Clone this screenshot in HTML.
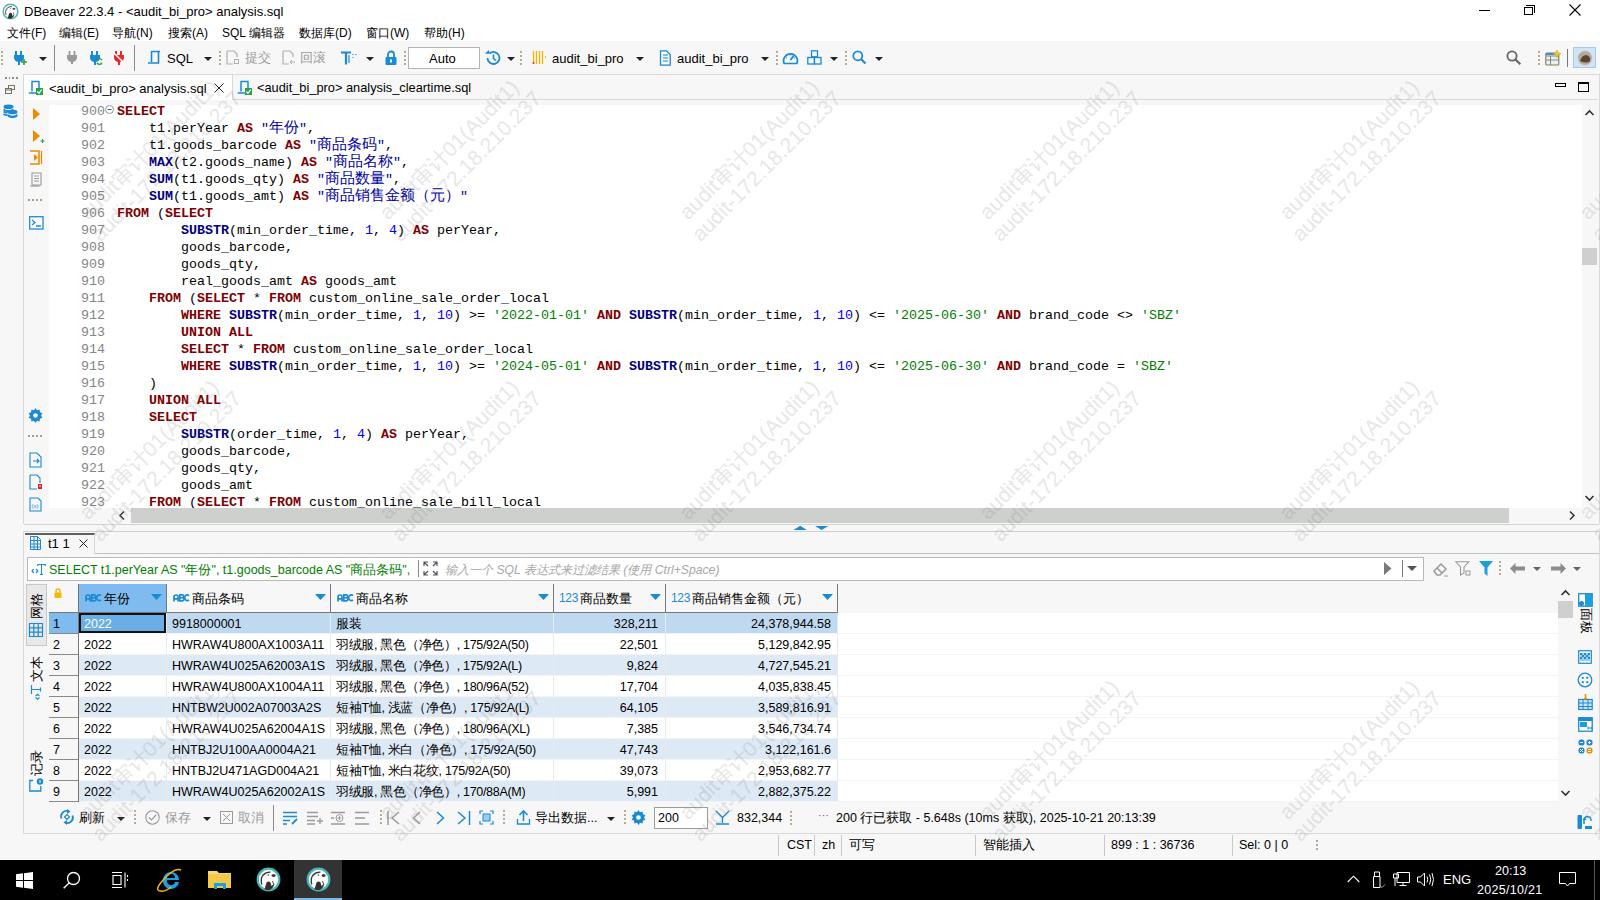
<!DOCTYPE html>
<html><head><meta charset="utf-8">
<style>
*{margin:0;padding:0;box-sizing:border-box}
html,body{width:1600px;height:900px;overflow:hidden;background:#f7f7f7;font-family:"Liberation Sans",sans-serif;font-size:13px;color:#000}
body{position:relative}
.a{position:absolute}
.t{position:absolute;white-space:pre;line-height:1}
svg{position:absolute;overflow:visible}
.code{position:absolute;left:117px;top:103px;font-family:"Liberation Mono",monospace;font-size:13.33px;line-height:17px;white-space:pre;color:#000}
.lns{position:absolute;left:60px;top:103px;width:45px;text-align:right;font-family:"Liberation Mono",monospace;font-size:13.33px;line-height:17px;white-space:pre;color:#858585}
.k{color:#7f0000;font-weight:bold}
.f{color:#00007f;font-weight:bold}
.s{color:#008000}
.n{color:#0000ff}
.q{color:#0000a0}
.dd{position:absolute;width:0;height:0;border-left:4px solid transparent;border-right:4px solid transparent;border-top:4px solid #222}
.grip{position:absolute;width:2px;height:16px;background:repeating-linear-gradient(#b8ab8f 0 2px,transparent 2px 4px)}
.sep{position:absolute;width:1px;height:26px;background:#8c8c8c}
.ui{font-size:12.5px}
.grey{color:#9a9a9a}
/* grid */
.row{position:absolute;left:49px;width:789px;height:21px}
.cell{position:absolute;top:0;height:21px;line-height:21px;font-size:12.5px;white-space:pre;overflow:hidden}
.wm{position:absolute;color:rgba(120,120,120,0.17);-webkit-text-stroke:0.3px rgba(120,120,120,0.17);letter-spacing:0.15px;font-size:21px;line-height:24px;white-space:pre;transform:rotate(-45deg);transform-origin:0 0;pointer-events:none}
.cj{font-size:15px;line-height:0}
.mn{font-size:12px}
</style></head><body>
<!-- TITLE BAR -->
<div class="a" style="left:0;top:0;width:1600px;height:41px;background:#fff"></div>
<svg style="left:1.5px;top:2.5px" width="17" height="17" viewBox="0 0 25 25"><circle cx="12.5" cy="12.5" r="10.8" fill="#fff" stroke="#45b8b8" stroke-width="2.2"/><path d="M8.5 22.5L10.5 15.5Q12.5 13.5 14.5 15.5L15.5 19L18.5 16.5Q17.5 21.5 13 23.2Z" fill="#3a2e28"/><path d="M5.8 17.5Q4.2 11.5 7 8.2Q10 5 14.5 5.2" stroke="#3a2e28" stroke-width="1.3" fill="none"/><ellipse cx="17.6" cy="8.6" rx="2.1" ry="1.4" fill="#3a2e28"/><circle cx="12.3" cy="8" r="0.7" fill="#3a2e28"/><path d="M16.5 14l1.2 3.5" stroke="#3a2e28" stroke-width="0.9"/></svg>
<div class="t" style="left:24px;top:5px;font-size:13px;color:#000">DBeaver 22.3.4 - &lt;audit_bi_pro&gt; analysis.sql</div>
<div class="a" style="left:1479px;top:10px;width:11px;height:1px;background:#000"></div>
<div class="a" style="left:1524px;top:7px;width:9px;height:8px;border:1px solid #000"></div>
<div class="a" style="left:1526px;top:5px;width:9px;height:8px;border-top:1px solid #000;border-right:1px solid #000"></div>
<svg style="left:1569px;top:4px" width="12" height="12"><path d="M0.5 0.5L11.5 11.5M11.5 0.5L0.5 11.5" stroke="#000" stroke-width="1.1"/></svg>
<!-- MENU -->
<div class="t mn" style="left:7px;top:27px">文件(F)</div>
<div class="t mn" style="left:59px;top:27px">编辑(E)</div>
<div class="t mn" style="left:112px;top:27px">导航(N)</div>
<div class="t mn" style="left:168px;top:27px">搜索(A)</div>
<div class="t mn" style="left:222px;top:27px">SQL 编辑器</div>
<div class="t mn" style="left:299px;top:27px">数据库(D)</div>
<div class="t mn" style="left:366px;top:27px">窗口(W)</div>
<div class="t mn" style="left:424px;top:27px">帮助(H)</div>
<!-- TOOLBAR -->
<div class="a" style="left:0;top:41px;width:1600px;height:33px;background:#f7f7f7"></div>
<div class="a" style="left:23px;top:74px;width:1577px;height:1px;background:#dadada"></div>
<div class="grip" style="left:1px;top:51px"></div>
<svg style="left:13px;top:50px" width="14" height="16" viewBox="0 0 14 16"><path d="M3 1v4M8 1v4" stroke="#1a8ad4" stroke-width="2"/><path d="M1 5h10v3a5 5 0 0 1-4 4v3h-2v-3a5 5 0 0 1-4-4z" fill="#1a8ad4"/><path d="M8 12h6M11 9v6" stroke="#2aa33a" stroke-width="1.6"/></svg>
<div class="dd" style="left:39px;top:57px"></div>
<div class="sep" style="left:54px;top:45px"></div>
<svg style="left:67px;top:51px" width="10" height="13" viewBox="0 0 10 13"><path d="M2.5 0v4M7.5 0v4" stroke="#9a9a9a" stroke-width="1.8"/><path d="M0 4h10v3a5 5 0 0 1-4 4v2h-2v-2a5 5 0 0 1-4-4z" fill="#9a9a9a"/></svg>
<svg style="left:89px;top:50px" width="14" height="16" viewBox="0 0 14 16"><path d="M3 1v4M8 1v4" stroke="#1a8ad4" stroke-width="2"/><path d="M1 5h10v3a5 5 0 0 1-4 4v3h-2v-3a5 5 0 0 1-4-4z" fill="#1a8ad4"/><path d="M8 10a3 3 0 0 1 5 0M13 13a3 3 0 0 1-5 0" stroke="#2aa33a" stroke-width="1.4" fill="none"/></svg>
<svg style="left:113px;top:50px" width="13" height="16" viewBox="0 0 13 16"><path d="M3 1v4M8 1v4" stroke="#e8262b" stroke-width="2"/><path d="M1 5h10v3a5 5 0 0 1-4 4v3h-2v-3a5 5 0 0 1-4-4z" fill="#e8262b"/><path d="M0 2L12 14" stroke="#fff" stroke-width="1.5"/></svg>
<div class="sep" style="left:134px;top:45px"></div>
<svg style="left:147px;top:50px" width="15" height="15" viewBox="0 0 15 15"><path d="M4 1.5h9M4.5 1.5v10.5M11.5 1.5v11.5H1" stroke="#1a8ad4" stroke-width="1.6" fill="none"/></svg>
<div class="t" style="left:167px;top:52px;font-size:13px">SQL</div>
<div class="dd" style="left:204px;top:57px"></div>
<div class="grip" style="left:219px;top:51px"></div>
<svg style="left:226px;top:50px" width="14" height="15" viewBox="0 0 14 15"><path d="M1 1h7l3 3v3M1 1v13h6" stroke="#b0b0b0" stroke-width="1.2" fill="none"/><rect x="8.5" y="9.5" width="4" height="4" stroke="#b0b0b0" fill="none"/></svg>
<div class="t ui grey" style="left:245px;top:52px">提交</div>
<svg style="left:282px;top:50px" width="14" height="15" viewBox="0 0 14 15"><path d="M1 1h7l3 3v3M1 1v13h6" stroke="#b0b0b0" stroke-width="1.2" fill="none"/><path d="M8 12h5M10 10l-2 2 2 2" stroke="#b0b0b0" fill="none"/></svg>
<div class="t ui grey" style="left:300px;top:52px">回滚</div>
<svg style="left:340px;top:51px" width="17" height="14" viewBox="0 0 17 14"><path d="M1 1.5h10M6 1.5v12" stroke="#1a8ad4" stroke-width="2.2"/><path d="M9 4v8M13 3v1M13 6v1M16 3v1" stroke="#1a8ad4" stroke-width="1.2"/></svg>
<div class="dd" style="left:366px;top:57px"></div>
<svg style="left:385px;top:50px" width="12" height="15" viewBox="0 0 12 15"><path d="M3 7V4.5a3 3 0 0 1 6 0V7" stroke="#1a8ad4" stroke-width="1.8" fill="none"/><rect x="0.5" y="7" width="11" height="8" rx="1" fill="#1a8ad4"/><rect x="5" y="9.5" width="2" height="3" fill="#fff"/></svg>
<div class="grip" style="left:404px;top:51px"></div>
<div class="a" style="left:408px;top:47px;width:72px;height:22px;background:#fff;border:1px solid #b4b4b4"></div>
<div class="t" style="left:429px;top:52px;font-size:13px">Auto</div>
<svg style="left:484px;top:50px" width="17" height="16" viewBox="0 0 17 16"><path d="M3.5 8a6 6 0 1 0 2-4.5" stroke="#1a8ad4" stroke-width="1.8" fill="none"/><path d="M1 3.5l4.5 0.5-0.5-4z" fill="#1a8ad4"/><path d="M9.5 4.5v4l2.5 2" stroke="#1a8ad4" stroke-width="1.6" fill="none"/></svg>
<div class="dd" style="left:507px;top:57px"></div>
<div class="grip" style="left:520px;top:51px"></div>
<svg style="left:532px;top:50px" width="15" height="15" viewBox="0 0 15 15"><path d="M1.5 1v13M4.5 1v13M7.5 1v13M10.5 1v13" stroke="#f0b400" stroke-width="1.3"/><path d="M13.5 6v2" stroke="#f0b400" stroke-width="1"/><rect x="0.8" y="12" width="1.5" height="2" fill="#e03030"/></svg>
<div class="t" style="left:552px;top:52px;font-size:13px">audit_bi_pro</div>
<div class="dd" style="left:636px;top:57px"></div>
<svg style="left:658px;top:50px" width="13" height="16" viewBox="0 0 13 16"><path d="M2.5 0.8h6l3.7 3.7v10.7h-9.7z" stroke="#1a8ad4" stroke-width="1.3" fill="none"/><path d="M5 5h5M5 8h5M5 11h5" stroke="#1a8ad4" stroke-width="1.2"/></svg>
<div class="t" style="left:677px;top:52px;font-size:13px">audit_bi_pro</div>
<div class="dd" style="left:761px;top:57px"></div>
<div class="grip" style="left:776px;top:51px"></div>
<svg style="left:782px;top:51px" width="17" height="14" viewBox="0 0 17 14"><path d="M2 12.5a7 7 0 1 1 13 0z" stroke="#1a8ad4" stroke-width="1.6" fill="none"/><path d="M8.5 9l3-4" stroke="#1a8ad4" stroke-width="1.8"/><path d="M4 7h1M8.5 3.5v1M12 7h1" stroke="#1a8ad4"/></svg>
<svg style="left:807px;top:50px" width="15" height="15" viewBox="0 0 15 15"><rect x="4.5" y="0.8" width="6" height="6" stroke="#1a8ad4" stroke-width="1.3" fill="none"/><rect x="0.8" y="7.5" width="6.5" height="6.5" stroke="#1a8ad4" stroke-width="1.3" fill="none"/><rect x="7.5" y="7.5" width="6.5" height="6.5" stroke="#1a8ad4" stroke-width="1.3" fill="none"/></svg>
<div class="dd" style="left:830px;top:57px"></div>
<div class="grip" style="left:845px;top:51px"></div>
<svg style="left:852px;top:50px" width="15" height="15" viewBox="0 0 15 15"><circle cx="5.8" cy="5.8" r="4.5" stroke="#1a8ad4" stroke-width="1.8" fill="none"/><path d="M9 9l4.5 4.5" stroke="#1a8ad4" stroke-width="2.2"/></svg>
<div class="dd" style="left:875px;top:57px"></div>
<!-- right toolbar -->
<svg style="left:1506px;top:50px" width="16" height="16" viewBox="0 0 16 16"><circle cx="6" cy="6" r="4.6" stroke="#666" stroke-width="1.8" fill="none"/><path d="M9.3 9.3l5 5" stroke="#666" stroke-width="2.2"/></svg>
<div class="grip" style="left:1538px;top:51px"></div>
<svg style="left:1545px;top:50px" width="16" height="16" viewBox="0 0 16 16"><rect x="0.8" y="3" width="13" height="12" rx="1" stroke="#8b7a50" stroke-width="1.1" fill="#e6f2fb"/><path d="M1 6h13M5.5 6v9M1 10h13" stroke="#8b7a50" stroke-width="0.9"/><rect x="1" y="3" width="13" height="2" fill="#3a8fd6"/><path d="M12 0l1.2 2.6 2.6 1.2-2.6 1.2L12 7.6l-1.2-2.6-2.6-1.2 2.6-1.2z" fill="#f5c542" stroke="#d49a00" stroke-width="0.5"/></svg>
<div class="a" style="left:1567px;top:49px;width:1px;height:18px;background:#777"></div>
<div class="a" style="left:1573px;top:47px;width:23px;height:21px;background:#cde5f7;border:1px solid #9fcbf0"></div>
<svg style="left:1577px;top:50px" width="16" height="16" viewBox="0 0 16 16"><circle cx="8" cy="8" r="7.4" fill="#b8a89a" stroke="#ddd" stroke-width="0.8"/><path d="M3 11q2-6 6-6q5 1 4 6q-3 3-10 0z" fill="#5a4536"/></svg>
<!-- LEFT TRIM -->
<div class="a" style="left:5px;top:77px;width:13px;height:2px;background:repeating-linear-gradient(90deg,#8c8c8c 0 2px,transparent 2px 3.5px)"></div>
<svg style="left:5px;top:85px" width="10" height="9" viewBox="0 0 10 9"><rect x="3.5" y="0.5" width="6" height="4" stroke="#7a7060" fill="none"/><rect x="0.5" y="3.5" width="6" height="5" stroke="#7a7060" fill="#f7f7f7"/><path d="M1 5h5" stroke="#7a7060"/></svg>
<svg style="left:3px;top:104px" width="15" height="15" viewBox="0 0 15 15"><ellipse cx="5.5" cy="2.8" rx="5" ry="2.3" fill="#1a8ad4"/><path d="M0.5 4.5q5 3.5 10 0v2q-5 3.5-10 0z" fill="#1a8ad4"/><ellipse cx="9.5" cy="8" rx="5" ry="2.3" fill="#1a8ad4"/><path d="M4.5 10q5 3.5 10 0v2.5q-5 3.5-10 0z" fill="#1a8ad4"/><path d="M0.5 7.5q2 1.5 4 1.3M0.5 10q2 1.5 4 1.3" stroke="#1a8ad4" stroke-width="1.6" fill="none"/></svg>
<!-- EDITOR PANE -->
<div class="a" style="left:23px;top:74px;width:1px;height:450px;background:#d9d9d9"></div>
<div class="a" style="left:1599px;top:74px;width:1px;height:450px;background:#d9d9d9"></div>
<div class="a" style="left:24px;top:75px;width:1574px;height:25px;background:#f7f7f7"></div>
<div class="a" style="left:24px;top:99px;width:1574px;height:1px;background:#d9d9d9"></div>
<div class="a" style="left:24px;top:75px;width:209px;height:25px;background:#fff;border-right:1px solid #d9d9d9"></div>
<svg style="left:28px;top:80px" width="16" height="16" viewBox="0 0 16 16"><path d="M3.5 1.5h8M4 1.5v10M11 1.5v11.5H0.8" stroke="#1a8ad4" stroke-width="1.5" fill="none"/><rect x="8" y="8" width="7" height="7" fill="#27a245"/><path d="M9.3 11.5l1.7 1.7 2.7-3.5" stroke="#fff" stroke-width="1.3" fill="none"/></svg>
<div class="t" style="left:49px;top:82px;font-size:13px">&lt;audit_bi_pro&gt; analysis.sql</div>
<svg style="left:214px;top:83px" width="10" height="10"><path d="M0.5 0.5L9.5 9.5M9.5 0.5L0.5 9.5" stroke="#222" stroke-width="1"/></svg>
<div class="a" style="left:232px;top:75px;width:1px;height:24px;background:#d9d9d9"></div>
<svg style="left:237px;top:80px" width="16" height="16" viewBox="0 0 16 16"><path d="M3.5 1.5h8M4 1.5v10M11 1.5v11.5H0.8" stroke="#1a8ad4" stroke-width="1.5" fill="none"/><rect x="8" y="8" width="7" height="7" fill="#27a245"/><path d="M9.3 11.5l1.7 1.7 2.7-3.5" stroke="#fff" stroke-width="1.3" fill="none"/></svg>
<div class="t" style="left:257px;top:82px;font-size:12.8px">&lt;audit_bi_pro&gt; analysis_cleartime.sql</div>
<div class="a" style="left:1555px;top:83px;width:11px;height:4px;border:1.5px solid #000"></div>
<div class="a" style="left:1578px;top:82px;width:11px;height:10px;border:1.5px solid #000;border-top-width:2.5px"></div>
<!-- editor body -->
<div class="a" style="left:49px;top:105px;width:1533px;height:403px;background:#fff"></div>
<!-- ruler icons -->
<svg style="left:33px;top:108px" width="8" height="12"><path d="M0 0L7 6L0 12z" fill="#f08a00"/></svg>
<svg style="left:33px;top:130px" width="12" height="14"><path d="M0 0L7 6L0 12z" fill="#f08a00"/><path d="M7.5 11h4M9.5 9v4" stroke="#2aa33a" stroke-width="1.2"/></svg>
<svg style="left:29px;top:150px" width="14" height="15" viewBox="0 0 14 15"><path d="M1 1h9v13H1" stroke="#f08a00" stroke-width="1.6" fill="none"/><path d="M5 4l4 3.5-4 3.5z" fill="#f08a00"/><path d="M12.5 1v13" stroke="#f08a00" stroke-width="1.3"/></svg>
<svg style="left:30px;top:172px" width="13" height="15" viewBox="0 0 13 15"><path d="M2 1h9v12H2z" stroke="#9a9a9a" stroke-width="1.1" fill="none"/><path d="M4 4h5M4 6.5h5M4 9h5" stroke="#9a9a9a"/><path d="M0.5 14h9" stroke="#9a9a9a" stroke-width="1.3"/></svg>
<div class="a" style="left:28px;top:199px;width:14px;height:2px;background:repeating-linear-gradient(90deg,#a89f8a 0 2px,transparent 2px 4px)"></div>
<svg style="left:29px;top:216px" width="15" height="14" viewBox="0 0 15 14"><rect x="0.7" y="0.7" width="13.3" height="12.3" stroke="#1a8ad4" stroke-width="1.3" fill="#fff"/><path d="M3 4l3 2.5-3 2.5M7 10h5" stroke="#1a8ad4" stroke-width="1.3" fill="none"/></svg>
<svg style="left:28px;top:408px" width="15" height="15" viewBox="0 0 15 15"><path d="M7.5 0l1.5 2.2 2.6-.7.3 2.7 2.5 1-1.3 2.3 1.3 2.3-2.5 1-.3 2.7-2.6-.7L7.5 15 6 12.8l-2.6.7-.3-2.7-2.5-1L2 7.5.6 5.2l2.5-1 .3-2.7L6 2.2z" fill="#1a8ad4"/><circle cx="7.5" cy="7.5" r="2.3" fill="#fff"/></svg>
<div class="a" style="left:28px;top:435px;width:14px;height:2px;background:repeating-linear-gradient(90deg,#a89f8a 0 2px,transparent 2px 4px)"></div>
<svg style="left:29px;top:452px" width="14" height="16" viewBox="0 0 14 16"><path d="M1 1h7l4 4v10H1z" stroke="#1a8ad4" stroke-width="1.1" fill="none"/><path d="M4 9h6M8 7l2 2-2 2" stroke="#1a8ad4" stroke-width="1.1" fill="none"/></svg>
<svg style="left:29px;top:474px" width="14" height="16" viewBox="0 0 14 16"><path d="M1 1h7l3 3v5M1 1v14h7" stroke="#1a8ad4" stroke-width="1.1" fill="none"/><rect x="9" y="10" width="4" height="5" fill="#e02020"/><path d="M11 11v2" stroke="#fff"/></svg>
<svg style="left:29px;top:497px" width="14" height="15" viewBox="0 0 14 15"><path d="M1 1h8l3 3v10H1z" stroke="#1a8ad4" stroke-width="1.1" fill="none"/><text x="2.5" y="11" font-size="6" fill="#1a8ad4" font-family="Liberation Sans">(x)</text></svg>
<!-- line numbers -->
<div class="lns">900
901
902
903
904
905
906
907
908
909
910
911
912
913
914
915
916
917
918
919
920
921
922
923</div>
<svg style="left:105px;top:105px" width="9" height="9"><circle cx="4.5" cy="4.5" r="4" fill="#fff" stroke="#8a96a8"/><path d="M2.5 4.5h4" stroke="#505a6a"/></svg>
<div class="code"><span class="k">SELECT</span>
    t1.perYear <span class="k">AS</span> <span class="q">"<span class="cj">年份</span>"</span>,
    t1.goods_barcode <span class="k">AS</span> <span class="q">"<span class="cj">商品条码</span>"</span>,
    <span class="f">MAX</span>(t2.goods_name) <span class="k">AS</span> <span class="q">"<span class="cj">商品名称</span>"</span>,
    <span class="f">SUM</span>(t1.goods_qty) <span class="k">AS</span> <span class="q">"<span class="cj">商品数量</span>"</span>,
    <span class="f">SUM</span>(t1.goods_amt) <span class="k">AS</span> <span class="q">"<span class="cj">商品销售金额（元）</span>"</span>
<span class="k">FROM</span> (<span class="k">SELECT</span>
        <span class="f">SUBSTR</span>(min_order_time, <span class="n">1</span>, <span class="n">4</span>) <span class="k">AS</span> perYear,
        goods_barcode,
        goods_qty,
        real_goods_amt <span class="k">AS</span> goods_amt
    <span class="k">FROM</span> (<span class="k">SELECT</span> * <span class="k">FROM</span> custom_online_sale_order_local
        <span class="k">WHERE</span> <span class="f">SUBSTR</span>(min_order_time, <span class="n">1</span>, <span class="n">10</span>) &gt;= <span class="s">'2022-01-01'</span> <span class="k">AND</span> <span class="f">SUBSTR</span>(min_order_time, <span class="n">1</span>, <span class="n">10</span>) &lt;= <span class="s">'2025-06-30'</span> <span class="k">AND</span> brand_code &lt;&gt; <span class="s">'SBZ'</span>
        <span class="k">UNION ALL</span>
        <span class="k">SELECT</span> * <span class="k">FROM</span> custom_online_sale_order_local
        <span class="k">WHERE</span> <span class="f">SUBSTR</span>(min_order_time, <span class="n">1</span>, <span class="n">10</span>) &gt;= <span class="s">'2024-05-01'</span> <span class="k">AND</span> <span class="f">SUBSTR</span>(min_order_time, <span class="n">1</span>, <span class="n">10</span>) &lt;= <span class="s">'2025-06-30'</span> <span class="k">AND</span> brand_code = <span class="s">'SBZ'</span>
    )
    <span class="k">UNION ALL</span>
    <span class="k">SELECT</span>
        <span class="f">SUBSTR</span>(order_time, <span class="n">1</span>, <span class="n">4</span>) <span class="k">AS</span> perYear,
        goods_barcode,
        goods_qty,
        goods_amt
    <span class="k">FROM</span> (<span class="k">SELECT</span> * <span class="k">FROM</span> custom_online_sale_bill_local</div>
<!-- clip below editor -->
<div class="a" style="left:49px;top:508px;width:1533px;height:16px;background:#f7f7f7"></div>
<div class="a" style="left:131px;top:508px;width:1378px;height:15px;background:#cdd0cc"></div>
<svg style="left:119px;top:511px" width="6" height="9"><path d="M5 0.5L1 4.5L5 8.5" stroke="#333" stroke-width="1.5" fill="none"/></svg>
<svg style="left:1569px;top:511px" width="6" height="9"><path d="M1 0.5L5 4.5L1 8.5" stroke="#333" stroke-width="1.5" fill="none"/></svg>
<!-- vertical scrollbar -->
<div class="a" style="left:1582px;top:105px;width:17px;height:403px;background:#f7f7f7"></div>
<svg style="left:1585px;top:110px" width="9" height="6"><path d="M0.5 5L4.5 1L8.5 5" stroke="#333" stroke-width="1.6" fill="none"/></svg>
<div class="a" style="left:1582px;top:248px;width:15px;height:17px;background:#cdd0cc"></div>
<svg style="left:1585px;top:495px" width="9" height="6"><path d="M0.5 1L4.5 5L8.5 1" stroke="#333" stroke-width="1.6" fill="none"/></svg>
<div class="a" style="left:24px;top:524px;width:1575px;height:1px;background:#d4d4d4"></div>
<!-- sash arrows -->
<svg style="left:793px;top:525px" width="36" height="6"><path d="M0.5 5L7.2 0.8L13.8 5z" fill="#1a8ad4"/><path d="M22 1h13.2L28.6 5z" fill="#1a8ad4"/></svg>
<!-- RESULTS PANE -->
<div class="a" style="left:23px;top:531px;width:1577px;height:303px;border:1px solid #d9d9d9;border-top-color:#d0d0d0;background:#f7f7f7"></div>
<div class="a" style="left:95px;top:553px;width:1504px;height:1px;background:#c2c2c2"></div>
<div class="a" style="left:25px;top:533px;width:70px;height:21px;background:#f7f7f7;border-right:1px solid #d9d9d9;border-top:2px solid #606060"></div>
<svg style="left:30px;top:536px" width="11" height="14" viewBox="0 0 11 14"><path d="M0.5 0.5h7l3 3v10h-10z" stroke="#1a8ad4" fill="none"/><path d="M0.5 4.5h10M0.5 8h10M0.5 11h10M4 0.5v13M7.5 0.5v13" stroke="#1a8ad4"/></svg>
<div class="t" style="left:48px;top:537px;font-size:13px">t1 1</div>
<svg style="left:79px;top:539px" width="9" height="9"><path d="M0.5 0.5L8.5 8.5M8.5 0.5L0.5 8.5" stroke="#222" stroke-width="1"/></svg>
<!-- filter -->
<div class="a" style="left:27px;top:557px;width:1397px;height:24px;background:#fff;border:1px solid #b9b9b9"></div>
<svg style="left:31px;top:563px" width="15" height="13" viewBox="0 0 15 13"><path d="M2.8 6L1 8 2.8 10M5 6l1.8 2L5 10" stroke="#1a8ad4" stroke-width="1.2" fill="none"/><path d="M6.5 1.5h8M10.5 1.5v10M9 11.5h3M6.8 1v2M14.2 1v2" stroke="#1a8ad4" stroke-width="1.1"/></svg>
<div class="t ui" style="left:49px;top:564px;color:#008000">SELECT t1.perYear AS "年份", t1.goods_barcode AS "商品条码",</div>
<div class="a" style="left:418px;top:560px;width:1px;height:17px;background:#888"></div>
<svg style="left:423px;top:561px" width="15" height="15" viewBox="0 0 15 15"><path d="M1 5V1h4M1 1l4 4M10 1h4v4M14 1l-4 4M1 10v4h4M1 14l4-4M14 10v4h-4M14 14l-4-4" stroke="#555" stroke-width="1.2" fill="none"/></svg>
<div class="t" style="left:445px;top:564px;font-size:12.2px;color:#a8a8a8;font-style:italic">输入一个 SQL 表达式来过滤结果 (使用 Ctrl+Space)</div>
<svg style="left:1384px;top:562px" width="8" height="13"><path d="M0 0L7.5 6.5L0 13z" fill="#7a7a7a"/></svg>
<div class="a" style="left:1402px;top:560px;width:1px;height:17px;background:#777"></div>
<div class="dd" style="left:1407px;top:566px;border-left-width:5px;border-right-width:5px;border-top-width:5px;border-top-color:#555"></div>
<svg style="left:1433px;top:561px" width="16" height="16" viewBox="0 0 16 16"><path d="M1 10L8 3l5 5-6 6H4z" stroke="#9a9a9a" stroke-width="1.5" fill="none"/><path d="M4 7l5 5" stroke="#9a9a9a" stroke-width="1.5"/><path d="M11 15h4" stroke="#9a9a9a"/></svg>
<svg style="left:1455px;top:561px" width="16" height="15" viewBox="0 0 16 15"><path d="M0.8 0.8h13L9 6v6L5.5 14V6z" stroke="#9a9a9a" stroke-width="1.1" fill="none"/><rect x="11" y="10" width="4" height="4" stroke="#9a9a9a" fill="none"/></svg>
<svg style="left:1479px;top:561px" width="14" height="15" viewBox="0 0 14 15"><path d="M0 0h14L8.5 6.5V15L5.5 12.5V6.5z" fill="#1aa0e0"/></svg>
<div class="grip" style="left:1499px;top:561px"></div>
<svg style="left:1510px;top:563px" width="16" height="11"><path d="M0 5.5L5.5 0v3.5H15v4H5.5V11z" fill="#8c8c8c"/></svg>
<div class="dd" style="left:1533px;top:567px;border-top-color:#666"></div>
<svg style="left:1550px;top:563px" width="16" height="11"><path d="M16 5.5L10.5 0v3.5H1v4h9.5V11z" fill="#8c8c8c"/></svg>
<div class="dd" style="left:1573px;top:567px;border-top-color:#666"></div>
<!-- left rail vertical tabs -->
<div class="a" style="left:26px;top:584px;width:21px;height:62px;background:#e8e8e8;border:1px solid #c8c8c8"></div>
<div class="t" style="left:36px;top:606px;font-size:13px;transform:translate(-50%,-50%) rotate(-90deg)">网格</div>
<svg style="left:29px;top:623px" width="14" height="14" viewBox="0 0 14 14"><path d="M0.5 0.5h13v13h-13zM0.5 4.8h13M0.5 9.2h13M4.8 0.5v13M9.2 0.5v13" stroke="#1a8ad4" stroke-width="1.2" fill="none"/></svg>
<div class="t" style="left:36px;top:669px;font-size:13px;transform:translate(-50%,-50%) rotate(-90deg)">文本</div>
<svg style="left:30px;top:684px" width="12" height="17" viewBox="0 0 12 17"><path d="M1.5 1v9M1.5 5.5h9M10.5 3.5v4" stroke="#1a8ad4" stroke-width="1.2" fill="none"/><path d="M5.5 12l2-1.7 2 1.7M5.5 13.5l2 1.7 2-1.7" stroke="#1a8ad4" stroke-width="1.1" fill="none"/></svg>
<div class="t" style="left:36px;top:763px;font-size:13px;transform:translate(-50%,-50%) rotate(-90deg)">记录</div>
<svg style="left:29px;top:778px" width="15" height="14" viewBox="0 0 15 14"><path d="M4 2.5H0.8v10.5h11V8" stroke="#1a8ad4" stroke-width="1.3" fill="none"/><circle cx="11" cy="3.5" r="3.2" fill="#1a8ad4"/><path d="M11 2v3" stroke="#fff"/></svg>
<!-- GRID -->
<div class="a" style="left:49px;top:613px;width:1509px;height:189px;background:#fff"></div>
<div class="a" style="left:49px;top:584px;width:789px;height:29px;background:#f7f7f7;border-bottom:1px solid #777"></div>
<div class="a" style="left:79px;top:584px;width:87px;height:28px;background:#7fbbee"></div>
<div class="a" style="left:78px;top:584px;width:1px;height:29px;background:#777"></div>
<div class="a" style="left:166px;top:584px;width:1px;height:29px;background:#777"></div>
<div class="a" style="left:330px;top:584px;width:1px;height:29px;background:#777"></div>
<div class="a" style="left:553px;top:584px;width:1px;height:29px;background:#777"></div>
<div class="a" style="left:665px;top:584px;width:1px;height:29px;background:#777"></div>
<div class="a" style="left:837px;top:584px;width:1px;height:29px;background:#777"></div>
<svg style="left:54px;top:588px" width="8" height="10" viewBox="0 0 8 10"><path d="M2 4.5V3a2 2 0 0 1 4 0v1.5" stroke="#f5b800" stroke-width="1.4" fill="none"/><rect x="0.5" y="4.5" width="7" height="5.5" rx="0.8" fill="#f5b800"/></svg>
<svg style="left:85px;top:594px" width="17" height="8" viewBox="0 0 17 8"><path d="M1 7.5V3a2 2 0 0 1 4 0v4.5M1 4.8h4" stroke="#1a8ad4" stroke-width="1.7" fill="none"/><path d="M6.8 0.9h2.4a1.4 1.4 0 0 1 0 2.8H6.8zM6.8 3.7h2.6a1.6 1.6 0 0 1 0 3.2H6.8z" stroke="#1a8ad4" stroke-width="1.6" fill="none"/><path d="M16 1.6A2.6 2.9 0 1 0 16 5.9" stroke="#1a8ad4" stroke-width="1.7" fill="none"/></svg>
<div class="t" style="left:104px;top:592px;font-size:13px">年份</div>
<svg style="left:151px;top:594px" width="11" height="6"><path d="M0 0h11L5.5 6z" fill="#1a8ad4"/></svg>
<svg style="left:173px;top:594px" width="17" height="8" viewBox="0 0 17 8"><path d="M1 7.5V3a2 2 0 0 1 4 0v4.5M1 4.8h4" stroke="#1a8ad4" stroke-width="1.7" fill="none"/><path d="M6.8 0.9h2.4a1.4 1.4 0 0 1 0 2.8H6.8zM6.8 3.7h2.6a1.6 1.6 0 0 1 0 3.2H6.8z" stroke="#1a8ad4" stroke-width="1.6" fill="none"/><path d="M16 1.6A2.6 2.9 0 1 0 16 5.9" stroke="#1a8ad4" stroke-width="1.7" fill="none"/></svg>
<div class="t" style="left:192px;top:592px;font-size:13px">商品条码</div>
<svg style="left:315px;top:594px" width="11" height="6"><path d="M0 0h11L5.5 6z" fill="#1a8ad4"/></svg>
<svg style="left:337px;top:594px" width="17" height="8" viewBox="0 0 17 8"><path d="M1 7.5V3a2 2 0 0 1 4 0v4.5M1 4.8h4" stroke="#1a8ad4" stroke-width="1.7" fill="none"/><path d="M6.8 0.9h2.4a1.4 1.4 0 0 1 0 2.8H6.8zM6.8 3.7h2.6a1.6 1.6 0 0 1 0 3.2H6.8z" stroke="#1a8ad4" stroke-width="1.6" fill="none"/><path d="M16 1.6A2.6 2.9 0 1 0 16 5.9" stroke="#1a8ad4" stroke-width="1.7" fill="none"/></svg>
<div class="t" style="left:356px;top:592px;font-size:13px">商品名称</div>
<svg style="left:538px;top:594px" width="11" height="6"><path d="M0 0h11L5.5 6z" fill="#1a8ad4"/></svg>
<div class="t" style="left:559px;top:592px;font-size:12px;color:#1a8ad4;letter-spacing:-0.3px">123</div>
<div class="t" style="left:580px;top:592px;font-size:13px">商品数量</div>
<svg style="left:650px;top:594px" width="11" height="6"><path d="M0 0h11L5.5 6z" fill="#1a8ad4"/></svg>
<div class="t" style="left:671px;top:592px;font-size:12px;color:#1a8ad4;letter-spacing:-0.3px">123</div>
<div class="t" style="left:692px;top:592px;font-size:13px">商品销售金额（元）</div>
<svg style="left:822px;top:594px" width="11" height="6"><path d="M0 0h11L5.5 6z" fill="#1a8ad4"/></svg>
<div class="a" style="left:49px;top:613px;width:789px;height:20px;background:#bfdaf0"></div>
<div class="a" style="left:49px;top:613px;width:29px;height:20px;background:#7fbbee"></div>
<div class="cell" style="left:53px;top:614px">1</div>
<div class="a" style="left:79px;top:613px;width:87px;height:20px;background:#6aaee6;border:2px solid #111"></div>
<div class="cell" style="left:84px;top:614px;color:#fff">2022</div>
<div class="cell" style="left:172px;top:614px">9918000001</div>
<div class="cell" style="left:336px;top:614px;letter-spacing:-0.3px">服装</div>
<div class="cell" style="left:554px;top:614px;width:104px;text-align:right">328,211</div>
<div class="cell" style="left:666px;top:614px;width:165px;text-align:right">24,378,944.58</div>
<div class="a" style="left:49px;top:634px;width:789px;height:20px;background:#ffffff"></div>
<div class="a" style="left:49px;top:634px;width:29px;height:20px;background:#f7f7f7"></div>
<div class="cell" style="left:53px;top:635px">2</div>
<div class="cell" style="left:84px;top:635px">2022</div>
<div class="cell" style="left:172px;top:635px">HWRAW4U800AX1003A11</div>
<div class="cell" style="left:336px;top:635px;letter-spacing:-0.3px">羽绒服, 黑色（净色）, 175/92A(50)</div>
<div class="cell" style="left:554px;top:635px;width:104px;text-align:right">22,501</div>
<div class="cell" style="left:666px;top:635px;width:165px;text-align:right">5,129,842.95</div>
<div class="a" style="left:49px;top:655px;width:789px;height:20px;background:#dde9f5"></div>
<div class="a" style="left:49px;top:655px;width:29px;height:20px;background:#f7f7f7"></div>
<div class="cell" style="left:53px;top:656px">3</div>
<div class="cell" style="left:84px;top:656px">2022</div>
<div class="cell" style="left:172px;top:656px">HWRAW4U025A62003A1S</div>
<div class="cell" style="left:336px;top:656px;letter-spacing:-0.3px">羽绒服, 黑色（净色）, 175/92A(L)</div>
<div class="cell" style="left:554px;top:656px;width:104px;text-align:right">9,824</div>
<div class="cell" style="left:666px;top:656px;width:165px;text-align:right">4,727,545.21</div>
<div class="a" style="left:49px;top:676px;width:789px;height:20px;background:#ffffff"></div>
<div class="a" style="left:49px;top:676px;width:29px;height:20px;background:#f7f7f7"></div>
<div class="cell" style="left:53px;top:677px">4</div>
<div class="cell" style="left:84px;top:677px">2022</div>
<div class="cell" style="left:172px;top:677px">HWRAW4U800AX1004A11</div>
<div class="cell" style="left:336px;top:677px;letter-spacing:-0.3px">羽绒服, 黑色（净色）, 180/96A(52)</div>
<div class="cell" style="left:554px;top:677px;width:104px;text-align:right">17,704</div>
<div class="cell" style="left:666px;top:677px;width:165px;text-align:right">4,035,838.45</div>
<div class="a" style="left:49px;top:697px;width:789px;height:20px;background:#dde9f5"></div>
<div class="a" style="left:49px;top:697px;width:29px;height:20px;background:#f7f7f7"></div>
<div class="cell" style="left:53px;top:698px">5</div>
<div class="cell" style="left:84px;top:698px">2022</div>
<div class="cell" style="left:172px;top:698px">HNTBW2U002A07003A2S</div>
<div class="cell" style="left:336px;top:698px;letter-spacing:-0.3px">短袖T恤, 浅蓝（净色）, 175/92A(L)</div>
<div class="cell" style="left:554px;top:698px;width:104px;text-align:right">64,105</div>
<div class="cell" style="left:666px;top:698px;width:165px;text-align:right">3,589,816.91</div>
<div class="a" style="left:49px;top:718px;width:789px;height:20px;background:#ffffff"></div>
<div class="a" style="left:49px;top:718px;width:29px;height:20px;background:#f7f7f7"></div>
<div class="cell" style="left:53px;top:719px">6</div>
<div class="cell" style="left:84px;top:719px">2022</div>
<div class="cell" style="left:172px;top:719px">HWRAW4U025A62004A1S</div>
<div class="cell" style="left:336px;top:719px;letter-spacing:-0.3px">羽绒服, 黑色（净色）, 180/96A(XL)</div>
<div class="cell" style="left:554px;top:719px;width:104px;text-align:right">7,385</div>
<div class="cell" style="left:666px;top:719px;width:165px;text-align:right">3,546,734.74</div>
<div class="a" style="left:49px;top:739px;width:789px;height:20px;background:#dde9f5"></div>
<div class="a" style="left:49px;top:739px;width:29px;height:20px;background:#f7f7f7"></div>
<div class="cell" style="left:53px;top:740px">7</div>
<div class="cell" style="left:84px;top:740px">2022</div>
<div class="cell" style="left:172px;top:740px">HNTBJ2U100AA0004A21</div>
<div class="cell" style="left:336px;top:740px;letter-spacing:-0.3px">短袖T恤, 米白（净色）, 175/92A(50)</div>
<div class="cell" style="left:554px;top:740px;width:104px;text-align:right">47,743</div>
<div class="cell" style="left:666px;top:740px;width:165px;text-align:right">3,122,161.6</div>
<div class="a" style="left:49px;top:760px;width:789px;height:20px;background:#ffffff"></div>
<div class="a" style="left:49px;top:760px;width:29px;height:20px;background:#f7f7f7"></div>
<div class="cell" style="left:53px;top:761px">8</div>
<div class="cell" style="left:84px;top:761px">2022</div>
<div class="cell" style="left:172px;top:761px">HNTBJ2U471AGD004A21</div>
<div class="cell" style="left:336px;top:761px;letter-spacing:-0.3px">短袖T恤, 米白花纹, 175/92A(50)</div>
<div class="cell" style="left:554px;top:761px;width:104px;text-align:right">39,073</div>
<div class="cell" style="left:666px;top:761px;width:165px;text-align:right">2,953,682.77</div>
<div class="a" style="left:49px;top:781px;width:789px;height:20px;background:#dde9f5"></div>
<div class="a" style="left:49px;top:781px;width:29px;height:20px;background:#f7f7f7"></div>
<div class="cell" style="left:53px;top:782px">9</div>
<div class="cell" style="left:84px;top:782px">2022</div>
<div class="cell" style="left:172px;top:782px">HWRAW4U025A62002A1S</div>
<div class="cell" style="left:336px;top:782px;letter-spacing:-0.3px">羽绒服, 黑色（净色）, 170/88A(M)</div>
<div class="cell" style="left:554px;top:782px;width:104px;text-align:right">5,991</div>
<div class="cell" style="left:666px;top:782px;width:165px;text-align:right">2,882,375.22</div>
<div class="a" style="left:78px;top:633px;width:1480px;height:1px;background:#f4f4f6"></div>
<div class="a" style="left:49px;top:633px;width:29px;height:1px;background:#8a8a8a"></div>
<div class="a" style="left:78px;top:654px;width:1480px;height:1px;background:#f4f4f6"></div>
<div class="a" style="left:49px;top:654px;width:29px;height:1px;background:#8a8a8a"></div>
<div class="a" style="left:78px;top:675px;width:1480px;height:1px;background:#f4f4f6"></div>
<div class="a" style="left:49px;top:675px;width:29px;height:1px;background:#8a8a8a"></div>
<div class="a" style="left:78px;top:696px;width:1480px;height:1px;background:#f4f4f6"></div>
<div class="a" style="left:49px;top:696px;width:29px;height:1px;background:#8a8a8a"></div>
<div class="a" style="left:78px;top:717px;width:1480px;height:1px;background:#f4f4f6"></div>
<div class="a" style="left:49px;top:717px;width:29px;height:1px;background:#8a8a8a"></div>
<div class="a" style="left:78px;top:738px;width:1480px;height:1px;background:#f4f4f6"></div>
<div class="a" style="left:49px;top:738px;width:29px;height:1px;background:#8a8a8a"></div>
<div class="a" style="left:78px;top:759px;width:1480px;height:1px;background:#f4f4f6"></div>
<div class="a" style="left:49px;top:759px;width:29px;height:1px;background:#8a8a8a"></div>
<div class="a" style="left:78px;top:780px;width:1480px;height:1px;background:#f4f4f6"></div>
<div class="a" style="left:49px;top:780px;width:29px;height:1px;background:#8a8a8a"></div>
<div class="a" style="left:78px;top:801px;width:1480px;height:1px;background:#f4f4f6"></div>
<div class="a" style="left:49px;top:801px;width:29px;height:1px;background:#8a8a8a"></div>
<div class="a" style="left:78px;top:613px;width:1px;height:189px;background:#777"></div>
<div class="a" style="left:166px;top:613px;width:1px;height:188px;background:#e6ebf0"></div>
<div class="a" style="left:330px;top:613px;width:1px;height:188px;background:#e6ebf0"></div>
<div class="a" style="left:553px;top:613px;width:1px;height:188px;background:#e6ebf0"></div>
<div class="a" style="left:665px;top:613px;width:1px;height:188px;background:#e6ebf0"></div>
<div class="a" style="left:837px;top:613px;width:1px;height:188px;background:#e6ebf0"></div>
<!-- grid scrollbar -->
<div class="a" style="left:1558px;top:584px;width:16px;height:217px;background:#f7f7f7"></div>
<svg style="left:1561px;top:590px" width="9" height="6"><path d="M0.5 5L4.5 1L8.5 5" stroke="#333" stroke-width="1.6" fill="none"/></svg>
<div class="a" style="left:1558px;top:601px;width:15px;height:17px;background:#cdd0cc"></div>
<svg style="left:1561px;top:790px" width="9" height="6"><path d="M0.5 1L4.5 5L8.5 1" stroke="#333" stroke-width="1.6" fill="none"/></svg>
<!-- right panel icons -->
<svg style="left:1578px;top:593px" width="15" height="14" viewBox="0 0 15 14"><rect x="0.7" y="0.7" width="13.5" height="12.5" stroke="#1a8ad4" stroke-width="1.3" fill="#fff"/><rect x="7" y="1" width="7" height="12" fill="#1aa0e0"/><circle cx="3.5" cy="10.5" r="2.5" fill="#1a8ad4"/></svg>
<div class="t" style="left:1586px;top:621px;font-size:13px;transform:translate(-50%,-50%) rotate(90deg)">面板</div>
<svg style="left:1578px;top:650px" width="14" height="14" viewBox="0 0 14 14"><rect x="0.7" y="0.7" width="12.6" height="12.6" stroke="#1a8ad4" stroke-width="1.2" fill="none"/><rect x="2" y="3" width="10" height="8" fill="#9ccbee"/><path d="M2 3h2v2H2zM6 3h2v2H6zM10 3h2v2h-2zM4 5h2v2H4zM8 5h2v2H8zM2 7h2v2H2zM6 7h2v2H6zM10 7h2v2h-2z" fill="#1a8ad4"/></svg>
<svg style="left:1577px;top:672px" width="16" height="16" viewBox="0 0 16 16"><circle cx="8" cy="8" r="6.8" stroke="#1a8ad4" stroke-width="1.3" fill="none"/><circle cx="5.8" cy="5.8" r="1.1" fill="#1a8ad4"/><circle cx="10.2" cy="5.8" r="1.1" fill="#1a8ad4"/><circle cx="5.8" cy="10.2" r="1.1" fill="#1a8ad4"/><circle cx="10.2" cy="10.2" r="1.1" fill="#1a8ad4"/></svg>
<svg style="left:1578px;top:694px" width="15" height="16" viewBox="0 0 15 16"><rect x="0.7" y="5.5" width="13.5" height="10" stroke="#1a8ad4" stroke-width="1.2" fill="#cfe6f8"/><path d="M1 9h13M1 12.5h13M5 5.5v10M10 5.5v10" stroke="#1a8ad4"/><path d="M7.5 0v6" stroke="#f08a00" stroke-width="1.5"/><path d="M5.5 4l2 2.5 2-2.5" fill="#f08a00"/></svg>
<svg style="left:1578px;top:717px" width="15" height="15" viewBox="0 0 15 15"><rect x="0.7" y="0.7" width="13.5" height="13.5" stroke="#1a8ad4" stroke-width="1.3" fill="#fff"/><rect x="1" y="1" width="13" height="3" fill="#1a8ad4"/><rect x="2" y="5" width="7" height="5" fill="#1aa0e0"/><path d="M10 11h4M10 9.5v3M14 9.5v3" stroke="#1a8ad4"/></svg>
<svg style="left:1578px;top:739px" width="15" height="15" viewBox="0 0 15 15"><rect x="0.5" y="0.5" width="6" height="6" rx="2.5" fill="#1a8ad4"/><rect x="8.5" y="0.5" width="6" height="6" rx="2.5" fill="#1a8ad4"/><rect x="0.5" y="8.5" width="6" height="6" rx="2.5" fill="#1a8ad4"/><rect x="8.5" y="8.5" width="6" height="6" rx="2.5" fill="#f08a00"/><path d="M2 3.5h3M10 3.5h3M11.5 2v3M2 10l3 3M5 10l-3 3M10 10.5h3M10 12.5h3" stroke="#fff"/></svg>
<svg style="left:1577px;top:814px" width="16" height="16" viewBox="0 0 16 16"><rect x="0.5" y="1" width="4.5" height="14" rx="1" fill="#1a8ad4"/><path d="M7 10V6a3.5 3.5 0 0 1 7 0v1" stroke="#1a8ad4" stroke-width="1.5" fill="none"/><path d="M5.5 6l2-3 2 3" fill="#1a8ad4"/><rect x="8" y="12" width="7" height="3" fill="#1a8ad4"/></svg>
<!-- bottom toolbar -->
<svg style="left:59px;top:809px" width="16" height="16" viewBox="0 0 16 16"><path d="M2.5 9.5A5.5 5.5 0 0 1 9.5 2.3" stroke="#1a8ad4" stroke-width="1.8" fill="none"/><path d="M13.5 6.5A5.5 5.5 0 0 1 6.5 13.7" stroke="#1a8ad4" stroke-width="1.8" fill="none"/><path d="M8 0l3.5 2.5L8 5z" fill="#1a8ad4"/><path d="M8 16l-3.5-2.5L8 11z" fill="#1a8ad4"/><path d="M5.5 8l2.5-2.5L10.5 8 8 10.5z" stroke="#1a8ad4" stroke-width="1.2" fill="none"/></svg>
<div class="t ui" style="left:79px;top:812px">刷新</div>
<div class="dd" style="left:117px;top:817px"></div>
<div class="grip" style="left:134px;top:810px"></div>
<svg style="left:145px;top:810px" width="15" height="15" viewBox="0 0 15 15"><circle cx="7.5" cy="7.5" r="6.7" stroke="#9a9a9a" stroke-width="1.1" fill="none"/><path d="M4 7.5l2.5 2.5 4.5-5" stroke="#9a9a9a" stroke-width="1.2" fill="none"/></svg>
<div class="t ui grey" style="left:165px;top:812px">保存</div>
<div class="dd" style="left:203px;top:817px"></div>
<svg style="left:220px;top:811px" width="13" height="13" viewBox="0 0 13 13"><rect x="0.5" y="0.5" width="12" height="12" stroke="#9a9a9a" fill="none"/><path d="M3 3l7 7M10 3l-7 7" stroke="#9a9a9a"/></svg>
<div class="t ui grey" style="left:238px;top:812px">取消</div>
<div class="sep" style="left:273px;top:805px"></div>
<svg style="left:283px;top:811px" width="16" height="14" viewBox="0 0 16 14"><path d="M0 1.5h14M0 5.5h14M0 9.5h7M0 13h4" stroke="#1a8ad4" stroke-width="1.5"/><path d="M9 13l5-5" stroke="#1a8ad4" stroke-width="1.8"/></svg>
<svg style="left:307px;top:811px" width="16" height="14" viewBox="0 0 16 14"><path d="M0 1.5h11M0 5.5h11M0 9.5h8M0 13h8" stroke="#9a9a9a" stroke-width="1.3"/><path d="M10 10h6M13 7v6" stroke="#9a9a9a" stroke-width="1.3"/></svg>
<svg style="left:331px;top:811px" width="16" height="14" viewBox="0 0 16 14"><path d="M0 1.5h14M0 13h14M0 7h3" stroke="#9a9a9a" stroke-width="1.3"/><circle cx="8.5" cy="7" r="3.5" stroke="#9a9a9a" fill="none"/><path d="M6.5 7h4M8.5 5v4" stroke="#9a9a9a"/></svg>
<svg style="left:355px;top:811px" width="16" height="14" viewBox="0 0 16 14"><path d="M0 1.5h14M0 7h10M0 13h14" stroke="#9a9a9a" stroke-width="1.3"/></svg>
<div class="grip" style="left:380px;top:810px"></div>
<svg style="left:387px;top:811px" width="14" height="14"><path d="M1 0v14" stroke="#9a9a9a" stroke-width="1.5"/><path d="M12 1L5 7l7 6" stroke="#9a9a9a" stroke-width="1.5" fill="none"/></svg>
<svg style="left:412px;top:811px" width="9" height="14"><path d="M8 1L1.5 7 8 13" stroke="#9a9a9a" stroke-width="1.5" fill="none"/></svg>
<svg style="left:436px;top:811px" width="9" height="14"><path d="M1 1l6.5 6L1 13" stroke="#1a8ad4" stroke-width="1.5" fill="none"/></svg>
<svg style="left:457px;top:811px" width="14" height="14"><path d="M1 1l7 6-7 6" stroke="#1a8ad4" stroke-width="1.5" fill="none"/><path d="M12.5 0v14" stroke="#1a8ad4" stroke-width="1.5"/></svg>
<svg style="left:479px;top:810px" width="15" height="15" viewBox="0 0 15 15"><path d="M1 4V1h3M11 1h3v3M14 11v3h-3M4 14H1v-3" stroke="#1a8ad4" stroke-width="1.2" fill="none"/><rect x="4" y="4" width="7" height="7" stroke="#1a8ad4" fill="#9ccbee"/></svg>
<div class="grip" style="left:503px;top:810px"></div>
<svg style="left:517px;top:809px" width="13" height="16" viewBox="0 0 13 16"><path d="M6.5 12V2M2.5 6l4-4 4 4" stroke="#1a8ad4" stroke-width="1.6" fill="none"/><path d="M0.5 10v5h12v-5" stroke="#1a8ad4" stroke-width="1.3" fill="none"/></svg>
<div class="t ui" style="left:535px;top:812px">导出数据...</div>
<div class="dd" style="left:607px;top:817px"></div>
<div class="grip" style="left:624px;top:810px"></div>
<svg style="left:631px;top:810px" width="15" height="15" viewBox="0 0 15 15"><path d="M7.5 0l1.5 2.2 2.6-.7.3 2.7 2.5 1-1.3 2.3 1.3 2.3-2.5 1-.3 2.7-2.6-.7L7.5 15 6 12.8l-2.6.7-.3-2.7-2.5-1L2 7.5.6 5.2l2.5-1 .3-2.7L6 2.2z" fill="#1a8ad4"/><circle cx="7.5" cy="7.5" r="2.3" fill="#fff"/></svg>
<div class="a" style="left:654px;top:807px;width:54px;height:22px;background:#fff;border:1px solid #9c9c9c"></div>
<div class="t ui" style="left:658px;top:812px">200</div>
<svg style="left:715px;top:810px" width="15" height="15" viewBox="0 0 15 15"><path d="M1 1l6.5 6.5L14 1M7.5 7.5V13M1 14h13" stroke="#1a8ad4" stroke-width="1.3" fill="none"/></svg>
<div class="t ui" style="left:737px;top:812px">832,344</div>
<div class="grip" style="left:790px;top:811px"></div>
<div class="t" style="left:818px;top:810px;font-size:11px;color:#666">···</div>
<div class="t ui" style="left:836px;top:812px">200 行已获取 - 5.648s (10ms 获取), 2025-10-21 20:13:39</div>
<!-- STATUS BAR -->
<div class="a" style="left:778px;top:835px;width:1px;height:21px;background:#c8c8c8"></div>
<div class="a" style="left:814px;top:835px;width:1px;height:21px;background:#c8c8c8"></div>
<div class="a" style="left:841px;top:835px;width:1px;height:21px;background:#c8c8c8"></div>
<div class="a" style="left:975px;top:835px;width:1px;height:21px;background:#c8c8c8"></div>
<div class="a" style="left:1104px;top:835px;width:1px;height:21px;background:#c8c8c8"></div>
<div class="a" style="left:1232px;top:835px;width:1px;height:21px;background:#c8c8c8"></div>
<div class="t ui" style="left:787px;top:839px">CST</div>
<div class="t ui" style="left:822px;top:839px">zh</div>
<div class="t ui" style="left:849px;top:839px">可写</div>
<div class="t ui" style="left:983px;top:839px">智能插入</div>
<div class="t ui" style="left:1111px;top:839px">899 : 1 : 36736</div>
<div class="t ui" style="left:1239px;top:839px">Sel: 0 | 0</div>
<div class="a" style="left:1316px;top:840px;width:2px;height:12px;background:repeating-linear-gradient(#aaa 0 2px,transparent 2px 4px)"></div>
<!-- TASKBAR -->
<div class="a" style="left:0;top:860px;width:1600px;height:40px;background:#000"></div>
<svg style="left:16px;top:872px" width="17" height="17" viewBox="0 0 17 17"><path d="M0 2.3l7-1v6.7H0zM8 1.2L17 0v8H8zM0 9h7v6.7l-7-1zM8 9h9v8l-9-1.2z" fill="#fff"/></svg>
<svg style="left:63px;top:871px" width="18" height="18" viewBox="0 0 18 18"><circle cx="10.5" cy="7.5" r="6" stroke="#fff" stroke-width="1.3" fill="none"/><path d="M6.3 11.7L0.7 17.3" stroke="#fff" stroke-width="1.4"/></svg>
<svg style="left:111px;top:872px" width="18" height="16" viewBox="0 0 18 16"><path d="M1 0.5h10M1 15.5h10M2 3.5h8v9H2z" stroke="#fff" stroke-width="1.1" fill="none"/><path d="M14 0.5v15M16.5 3v2M16.5 7v2" stroke="#fff" stroke-width="1.1"/></svg>
<svg style="left:159px;top:867px" width="24" height="25" viewBox="0 0 24 25"><path d="M4 13a8 8 0 0 1 16 0H8a4 4 0 0 0 8 2h4a8 8 0 0 1-16-2zM8 11h8a4 4 0 0 0-8 0z" fill="#1ba1e2"/><path d="M22 3q-6-3-17 9t-3 12q4 1 10-4" stroke="#f2b81a" stroke-width="1.5" fill="none"/></svg>
<svg style="left:208px;top:869px" width="24" height="20" viewBox="0 0 24 20"><path d="M0 2h9l2 2h12v15H0z" fill="#f8d775"/><path d="M0 5h23v14H0z" fill="#f4c84a"/><path d="M6 20v-6h12v6h-3v-3h-6v3z" fill="#1ba1e2"/></svg>
<svg style="left:256px;top:867px" width="25" height="25" viewBox="0 0 25 25"><circle cx="12.5" cy="12.5" r="10.8" fill="#fff" stroke="#45b8b8" stroke-width="2.2"/><path d="M8.5 22.5L10.5 15.5Q12.5 13.5 14.5 15.5L15.5 19L18.5 16.5Q17.5 21.5 13 23.2Z" fill="#3a2e28"/><path d="M5.8 17.5Q4.2 11.5 7 8.2Q10 5 14.5 5.2" stroke="#3a2e28" stroke-width="1.3" fill="none"/><ellipse cx="17.6" cy="8.6" rx="2.1" ry="1.4" fill="#3a2e28"/><circle cx="12.3" cy="8" r="0.7" fill="#3a2e28"/><path d="M16.5 14l1.2 3.5" stroke="#3a2e28" stroke-width="0.9"/></svg>
<div class="a" style="left:294px;top:860px;width:48px;height:40px;background:#333"></div>
<div class="a" style="left:294px;top:898px;width:48px;height:2px;background:#76b9ed"></div>
<svg style="left:306px;top:867px" width="25" height="25" viewBox="0 0 25 25"><circle cx="12.5" cy="12.5" r="10.8" fill="#fff" stroke="#45b8b8" stroke-width="2.2"/><path d="M8.5 22.5L10.5 15.5Q12.5 13.5 14.5 15.5L15.5 19L18.5 16.5Q17.5 21.5 13 23.2Z" fill="#3a2e28"/><path d="M5.8 17.5Q4.2 11.5 7 8.2Q10 5 14.5 5.2" stroke="#3a2e28" stroke-width="1.3" fill="none"/><ellipse cx="17.6" cy="8.6" rx="2.1" ry="1.4" fill="#3a2e28"/><circle cx="12.3" cy="8" r="0.7" fill="#3a2e28"/><path d="M16.5 14l1.2 3.5" stroke="#3a2e28" stroke-width="0.9"/></svg>
<svg style="left:1347px;top:875px" width="13" height="8"><path d="M0.7 7L6.5 1.2 12.3 7" stroke="#fff" stroke-width="1.1" fill="none"/></svg>
<svg style="left:1372px;top:871px" width="14" height="17" viewBox="0 0 14 17"><path d="M2 5.5h6v11H1.5V5.5zM2.5 1h5v4.5h-5z" stroke="#fff" stroke-width="1" fill="none"/><path d="M8 15l2 1.5 3-3" stroke="#aaa" fill="none"/></svg>
<svg style="left:1393px;top:872px" width="17" height="14" viewBox="0 0 17 14"><path d="M4 0.5h12.5v10h-12.5zM0.5 2h5v4h-5zM10 10.5v3M6.5 13.5h7M2 6v8" stroke="#fff" stroke-width="1" fill="none"/></svg>
<svg style="left:1417px;top:872px" width="17" height="15" viewBox="0 0 17 15"><path d="M0.5 5h3l4-4v13l-4-4h-3z" stroke="#fff" fill="none"/><path d="M10 4.5q1.5 3 0 6M12.5 2.5q2.5 5 0 10M15 1q3 6.5 0 13" stroke="#fff" fill="none"/></svg>
<div class="t" style="left:1443px;top:873px;font-size:13px;color:#fff">ENG</div>
<div class="t" style="left:1495px;top:865px;font-size:12.5px;color:#fff">20:13</div>
<div class="t" style="left:1477px;top:884px;font-size:12.5px;color:#fff;letter-spacing:0.3px">2025/10/21</div>
<svg style="left:1559px;top:872px" width="17" height="16" viewBox="0 0 17 16"><path d="M0.5 0.5h16v11h-6l-2 2.5-2-2.5h-6z" stroke="#fff" fill="none"/></svg>
<div class="a" style="left:1594px;top:860px;width:1px;height:40px;background:#555"></div>
<div class="wm" style="left:82px;top:224px"><div style="position:absolute;left:0px;top:-17px;width:200px;text-align:center">audit审计01(Audit1)<br>audit-172.18.210.237</div></div>
<div class="wm" style="left:382px;top:224px"><div style="position:absolute;left:0px;top:-17px;width:200px;text-align:center">audit审计01(Audit1)<br>audit-172.18.210.237</div></div>
<div class="wm" style="left:682px;top:224px"><div style="position:absolute;left:0px;top:-17px;width:200px;text-align:center">audit审计01(Audit1)<br>audit-172.18.210.237</div></div>
<div class="wm" style="left:982px;top:224px"><div style="position:absolute;left:0px;top:-17px;width:200px;text-align:center">audit审计01(Audit1)<br>audit-172.18.210.237</div></div>
<div class="wm" style="left:1282px;top:224px"><div style="position:absolute;left:0px;top:-17px;width:200px;text-align:center">audit审计01(Audit1)<br>audit-172.18.210.237</div></div>
<div class="wm" style="left:1582px;top:224px"><div style="position:absolute;left:0px;top:-17px;width:200px;text-align:center">audit审计01(Audit1)<br>audit-172.18.210.237</div></div>
<div class="wm" style="left:82px;top:524px"><div style="position:absolute;left:0px;top:-17px;width:200px;text-align:center">audit审计01(Audit1)<br>audit-172.18.210.237</div></div>
<div class="wm" style="left:382px;top:524px"><div style="position:absolute;left:0px;top:-17px;width:200px;text-align:center">audit审计01(Audit1)<br>audit-172.18.210.237</div></div>
<div class="wm" style="left:682px;top:524px"><div style="position:absolute;left:0px;top:-17px;width:200px;text-align:center">audit审计01(Audit1)<br>audit-172.18.210.237</div></div>
<div class="wm" style="left:982px;top:524px"><div style="position:absolute;left:0px;top:-17px;width:200px;text-align:center">audit审计01(Audit1)<br>audit-172.18.210.237</div></div>
<div class="wm" style="left:1282px;top:524px"><div style="position:absolute;left:0px;top:-17px;width:200px;text-align:center">audit审计01(Audit1)<br>audit-172.18.210.237</div></div>
<div class="wm" style="left:1582px;top:524px"><div style="position:absolute;left:0px;top:-17px;width:200px;text-align:center">audit审计01(Audit1)<br>audit-172.18.210.237</div></div>
<div class="wm" style="left:82px;top:824px"><div style="position:absolute;left:0px;top:-17px;width:200px;text-align:center">audit审计01(Audit1)<br>audit-172.18.210.237</div></div>
<div class="wm" style="left:382px;top:824px"><div style="position:absolute;left:0px;top:-17px;width:200px;text-align:center">audit审计01(Audit1)<br>audit-172.18.210.237</div></div>
<div class="wm" style="left:682px;top:824px"><div style="position:absolute;left:0px;top:-17px;width:200px;text-align:center">audit审计01(Audit1)<br>audit-172.18.210.237</div></div>
<div class="wm" style="left:982px;top:824px"><div style="position:absolute;left:0px;top:-17px;width:200px;text-align:center">audit审计01(Audit1)<br>audit-172.18.210.237</div></div>
<div class="wm" style="left:1282px;top:824px"><div style="position:absolute;left:0px;top:-17px;width:200px;text-align:center">audit审计01(Audit1)<br>audit-172.18.210.237</div></div>
<div class="wm" style="left:1582px;top:824px"><div style="position:absolute;left:0px;top:-17px;width:200px;text-align:center">audit审计01(Audit1)<br>audit-172.18.210.237</div></div>
</body></html>
